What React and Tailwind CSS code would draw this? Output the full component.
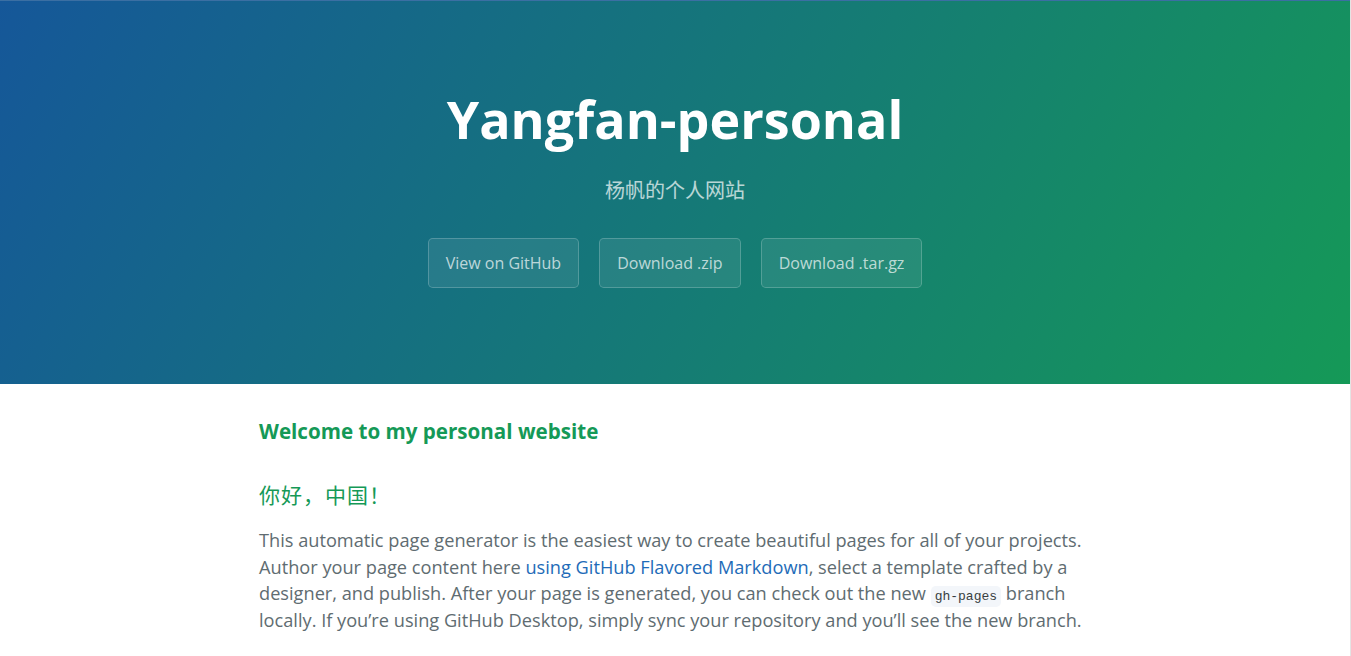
import React from 'react'

const buttons = ['View on GitHub', 'Download .zip', 'Download .tar.gz']

export default function App() {
  return (
    <div className="h-[656px] overflow-hidden bg-white border-r border-[#e4e4e4] font-['Open_Sans','Noto_Sans_CJK_SC',sans-serif] text-[#606c71] leading-normal">
      <section className="border-t border-[#3b6fa3] bg-[linear-gradient(120deg,#155799,#159957)] px-24 pt-[79px] pb-20 text-center text-white">
        <h1 className="mb-[0.1rem] text-[3.25rem] font-bold leading-normal">Yangfan-personal</h1>
        <h2 className="mt-[19px] mb-[33px] text-xl font-normal opacity-70">杨帆的个人网站</h2>
        <div className="flex justify-center gap-5 mb-4">
          {buttons.map((b) => (
            <a
              key={b}
              href="#"
              className="rounded-[0.3rem] border border-white/20 bg-white/[0.08] px-[17px] py-3 text-base text-white/70 leading-normal"
            >
              {b}
            </a>
          ))}
        </div>
      </section>

      <section className="mx-auto max-w-[64rem] px-24 pt-8 text-[18.2px] leading-[26.6px]">
        <h3 className="text-[20.6px] leading-[31px] font-bold text-[#159957] mb-[33px]">Welcome to my personal website</h3>
        <h3 className="text-[21px] leading-[31px] font-normal text-[#159957] mb-4 tracking-[1px]">你好，中国！</h3>
        <p>
          This automatic page generator is the easiest way to create beautiful pages for all of your projects.
          Author your page content here{' '}
          <a href="#" className="text-[#1e6bb8]">using GitHub Flavored Markdown</a>, select a template crafted by a
          designer, and publish. After your page is generated, you can check out the new{' '}
          <code className="rounded-[0.3rem] bg-[#f3f6fa] px-1 py-[3px] font-['Liberation_Mono',monospace] text-[13px] leading-none text-[#383e41]">gh-pages</code>{' '}
          branch locally. If you’re using GitHub Desktop, simply sync your repository and you’ll see the new branch.
        </p>
      </section>
    </div>
  )
}
